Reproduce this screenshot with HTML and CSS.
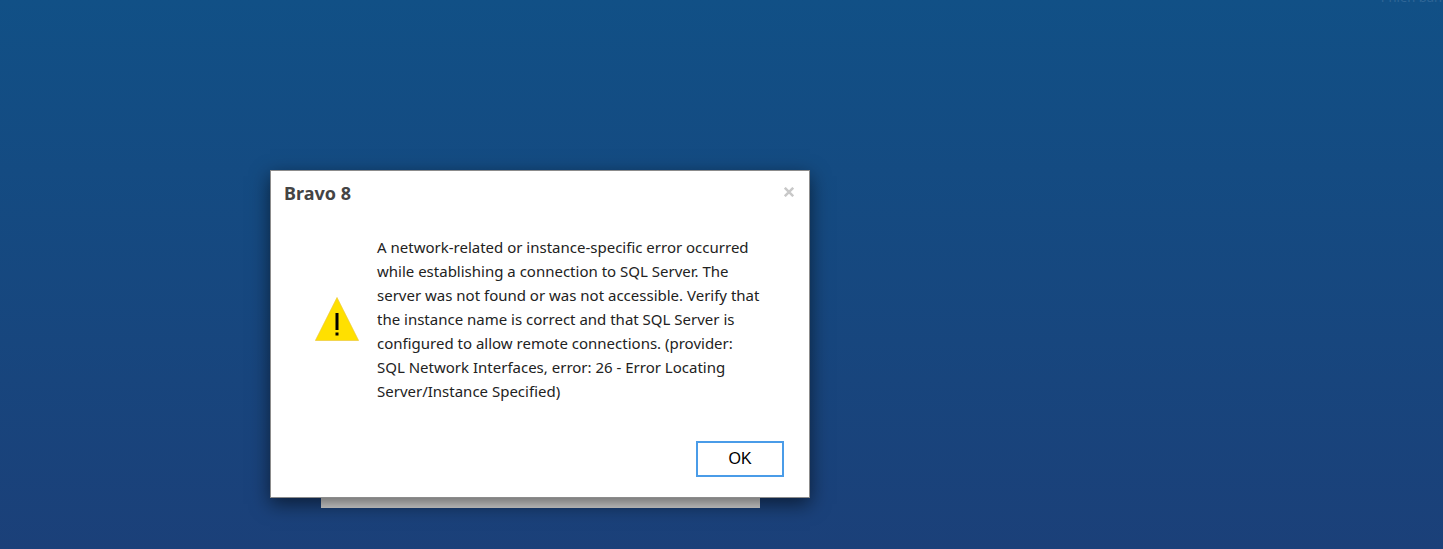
FILE: index.html
```html
<!DOCTYPE html>
<html lang="en">
<head>
<meta charset="utf-8">
<title>Bravo 8</title>
<link rel="stylesheet" href="styles.css">
</head>
<body>
<span class="version" lang="vi">Phiên bản</span>
<main class="stage">
  <div class="login-card"></div>
  <section class="dialog" role="alertdialog" aria-labelledby="title" aria-describedby="message">
    <header class="dialog-header">
      <h1 class="dialog-title" id="title">Bravo 8</h1>
      <button class="close" type="button" aria-label="Close">
        <svg width="10" height="10" viewBox="0 0 10 10"><path d="M0.8 0.8L9.2 9.2M9.2 0.8L0.8 9.2" stroke="#c8c8c8" stroke-width="2.5"/></svg>
      </button>
    </header>
    <div class="dialog-body">
      <svg class="warning" width="44" height="44" viewBox="0 0 44 44" aria-hidden="true">
        <path d="M22 0.5L43.6 43.5H0.4Z" fill="#ffe000" stroke="#ecca3c" stroke-width="0.7"/>
        <path d="M20.5 16h3v17h-3zM20.5 35.5h3v3h-3z" fill="#000"/>
      </svg>
      <p class="message" id="message">A network-related or instance-specific error occurred while establishing a connection to SQL Server. The server was not found or was not accessible. Verify that the instance name is correct and that SQL Server is configured to allow remote connections. (provider: SQL Network Interfaces, error: 26 - Error Locating Server/Instance Specified)</p>
    </div>
    <footer class="dialog-footer">
      <button class="ok" type="button">OK</button>
    </footer>
  </section>
</main>
</body>
</html>
```
FILE: styles.css
```css
* {
  box-sizing: border-box;
}

body {
  margin: 0;
  min-height: 100vh;
  overflow: hidden;
  font-family: "Noto Sans", "Open Sans", sans-serif;
  background: linear-gradient(#115086, #1b4079);
}

.version {
  position: absolute;
  top: -12px;
  right: 1px;
  font-size: 13px;
  line-height: 18px;
  color: #2f6697;
}

.stage {
  display: grid;
  grid-template-columns: minmax(0, 540px);
  padding: 170px 16px 40px 270px;
}

.login-card {
  grid-area: 1 / 1;
  margin: 40px 50px 0 51px;
  background: #d9d9d9;
}

.dialog {
  grid-area: 1 / 1;
  margin-bottom: 10px;
  padding: 12px 13px 20px;
  background: #fff;
  border: 1px solid #8c8c8c;
  box-shadow: 0 6px 18px rgba(0, 0, 0, 0.55);
}

.dialog-header {
  display: flex;
  align-items: center;
  justify-content: space-between;
}

.dialog-title {
  margin: 0;
  font-size: 18px;
  line-height: 20px;
  font-weight: 700;
  color: #444;
}

.close {
  display: flex;
  padding: 0 2px 2px 0;
  border: 0;
  background: none;
}

.dialog-body {
  display: flex;
  align-items: center;
  gap: 18px;
  padding: 32px 32px 38px 31px;
}

.warning {
  flex: none;
}

.message {
  margin: 0;
  font-size: 15px;
  line-height: 24px;
  color: #222;
}

.dialog-footer {
  display: flex;
  justify-content: flex-end;
  padding-right: 12px;
}

.ok {
  width: 88px;
  height: 36px;
  border: 2px solid #4a9ce8;
  background: #fff;
  font-family: "Liberation Sans", Arial, sans-serif;
  font-size: 16px;
  color: #000;
}
```
